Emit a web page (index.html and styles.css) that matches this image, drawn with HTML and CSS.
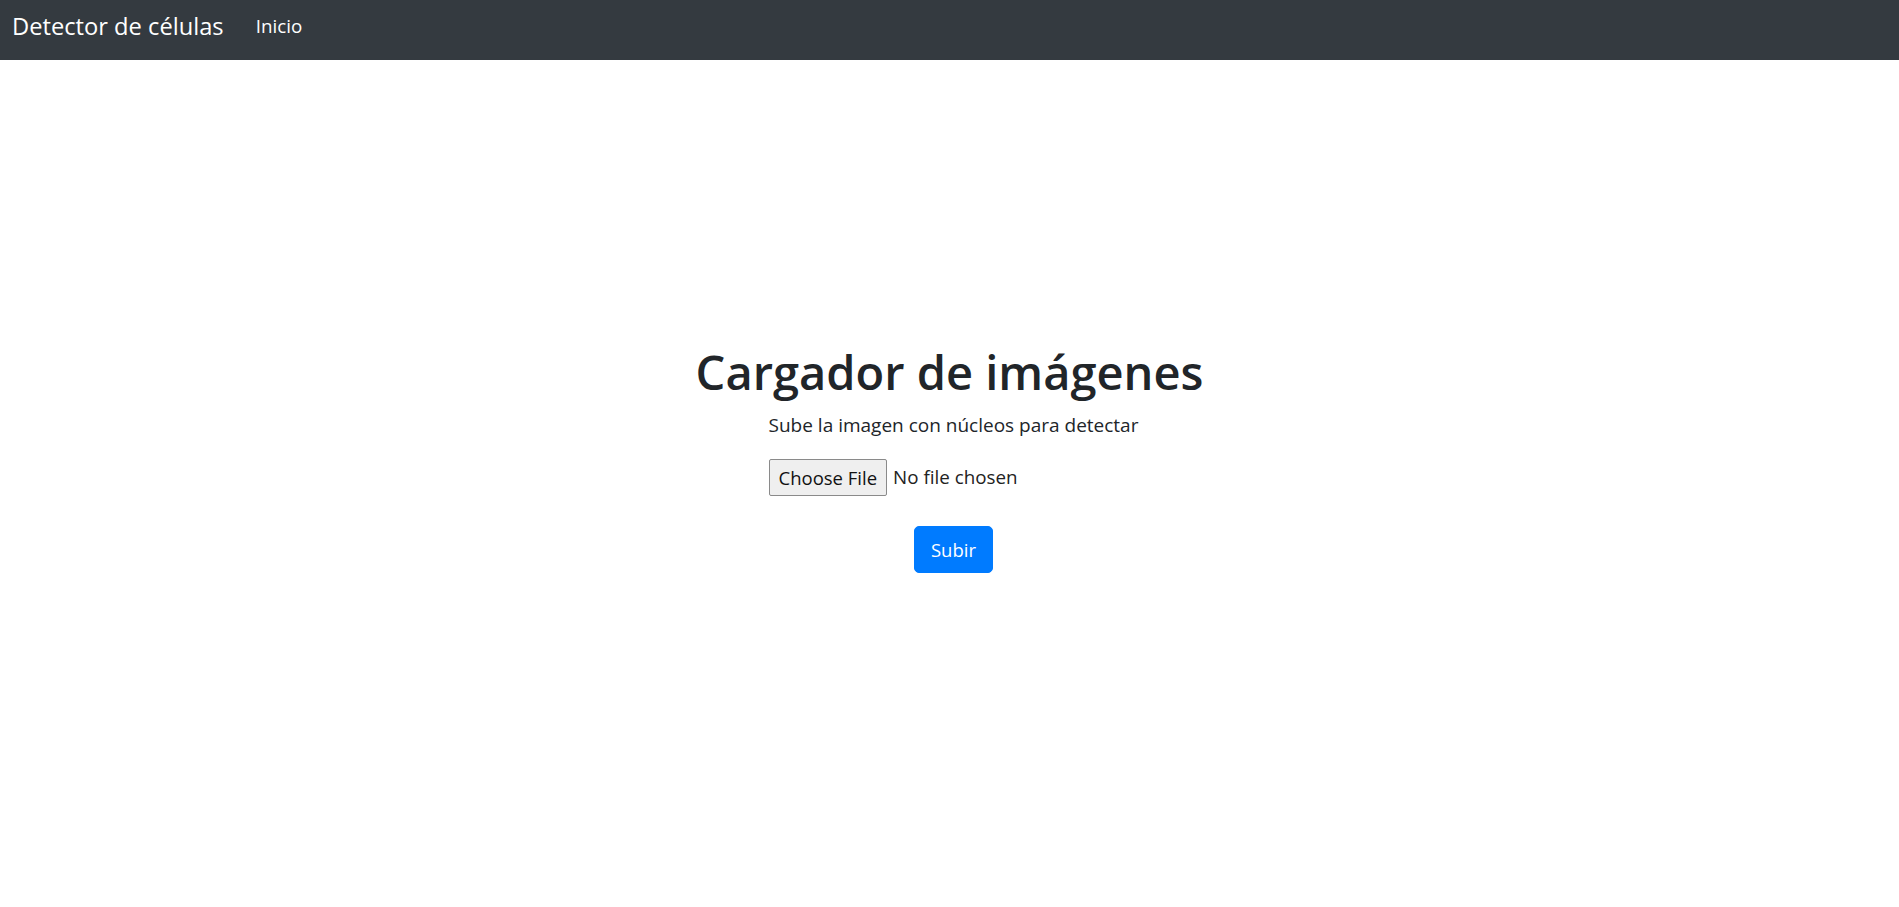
FILE: index.html
```html
<!DOCTYPE html>
<html lang="es">
<head>
<meta charset="utf-8">
<title>Detector de células</title>
<link rel="stylesheet" href="styles.css">
</head>
<body>
<nav class="navbar">
  <a class="brand" href="#">Detector de células</a>
  <a class="nav-link" href="#">Inicio</a>
</nav>
<main class="main">
  <h1 class="title">Cargador de imágenes</h1>
  <form class="upload">
    <div class="upload-box">
      <p class="subtitle">Sube la imagen con núcleos para detectar</p>
      <div class="file-row">
        <label class="file-btn">Choose File<input class="file-input" type="file" name="file"></label>
        <span class="file-name">No file chosen</span>
      </div>
    </div>
    <div class="submit-row">
      <button class="btn-primary" type="submit">Subir</button>
    </div>
  </form>
</main>
</body>
</html>
```
FILE: styles.css
```css
* { box-sizing: border-box; }
html, body { margin: 0; padding: 0; }
body {
  font-family: "Open Sans", "Noto Sans", sans-serif;
  color: #212529;
  background: #fff;
}
.navbar {
  height: 60px;
  background: #343a40;
  display: flex;
  align-items: flex-start;
  padding: 11px 0 0 12px;
}
.brand {
  color: #fff;
  text-decoration: none;
  font-size: 23.7px;
  line-height: 30px;
  margin-right: 32px;
}
.nav-link {
  color: #fff;
  text-decoration: none;
  font-size: 18.8px;
  line-height: 30px;
}
.main {
  padding-top: 284px;
  text-align: center;
}
.title {
  margin: 0;
  font-size: 47px;
  line-height: 56px;
  font-weight: 600;
}
.upload { margin: 11px 0 0; }
.upload-box {
  display: inline-block;
  text-align: left;
  padding-left: 8px;
}
.subtitle {
  margin: 0;
  font-size: 19px;
  line-height: 28px;
  text-align: center;
}
.file-row {
  margin-top: 20px;
  display: flex;
  align-items: center;
  gap: 6px;
}
.file-btn {
  position: relative;
  display: inline-block;
  height: 37px;
  padding: 0 9px;
  border: 1px solid #8a8a8a;
  border-radius: 2px;
  background: #efefef;
  font-size: 18.5px;
  line-height: 35px;
  color: #111;
  cursor: pointer;
  overflow: hidden;
}
.file-input {
  position: absolute;
  inset: 0;
  opacity: 0;
  cursor: pointer;
}
.file-name {
  font-size: 18.8px;
  line-height: 35px;
  color: #222;
}
.submit-row {
  margin-top: 30px;
  padding-left: 8px;
}
.btn-primary {
  height: 47px;
  padding: 0 16px;
  border: 1px solid #007bff;
  border-radius: 5px;
  background: #007bff;
  color: #fff;
  font-family: "Open Sans", "Noto Sans", sans-serif;
  font-size: 18.5px;
  line-height: 45px;
  cursor: pointer;
}
```
